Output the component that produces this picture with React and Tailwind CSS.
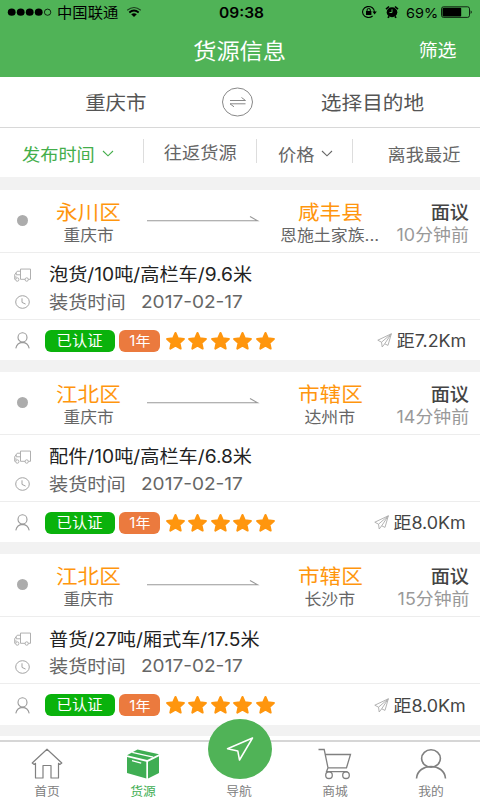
import React from "react";

const loads = [
  { from: "永川区", fromCity: "重庆市", to: "咸丰县", toCity: "恩施土家族...", ago: "10分钟前", goods: "泡货/10吨/高栏车/9.6米", km: "距7.2Km" },
  { from: "江北区", fromCity: "重庆市", to: "市辖区", toCity: "达州市", ago: "14分钟前", goods: "配件/10吨/高栏车/6.8米", km: "距8.0Km" },
  { from: "江北区", fromCity: "重庆市", to: "市辖区", toCity: "长沙市", ago: "15分钟前", goods: "普货/27吨/厢式车/17.5米", km: "距8.0Km" },
];

// Wide-set text; the transform origin keeps the chosen edge in place.
function Text({ className = "", children }) {
  return <span className={"inline-block whitespace-nowrap scale-x-[1.065] " + className}>{children}</span>;
}

function StatusBar() {
  return (
    <div className="flex h-6 items-center text-black">
      <svg className="ml-[7px] w-[46px] h-3 shrink-0" viewBox="0 0 46 12">
        {[4.7, 13.7, 22.7, 31.7].map((x) => <ellipse key={x} cx={x} cy="6.2" rx="3.9" ry="3.6" />)}
        <ellipse cx="40.6" cy="6.2" rx="3.2" ry="3.1" fill="none" stroke="#000" strokeWidth=".8" />
      </svg>
      <Text className="ml-[4px] w-[62px] origin-left pt-px text-[14.4px] leading-6">中国联通</Text>
      <svg className="ml-[7px] w-4 h-3 shrink-0" viewBox="0 0 16 12" fill="none" stroke="#000">
        <path d="M1.2 4.3Q8-1.2 14.8 4.3" strokeWidth="1.1" opacity=".65" />
        <path d="M3.3 6.4Q8 2.8 12.7 6.4" strokeWidth="1.9" />
        <path d="M5.2 8.3Q8 6.2 10.8 8.3L8 11Z" fill="#000" stroke="none" />
      </svg>
      <Text className="ml-[77px] w-[46px] origin-left pt-px text-[14.6px] font-semibold leading-6">09:38</Text>
      <svg className="ml-[96px] w-4 h-4 shrink-0" viewBox="0 0 16 16" fill="none" stroke="#000">
        <path d="M13.5 8.2A6 5.5 0 1 0 11.6 12" strokeWidth="1.1" />
        <path d="M11.4 7.6h4.4l-2.2 2.8Z" fill="#000" stroke="none" />
        <rect x="5" y="7" width="5.4" height="4" fill="#000" stroke="none" />
        <path d="M6.1 7.2V6a1.6 1.6 0 0 1 3.2 0v1.2" />
      </svg>
      <svg className="ml-[8px] w-[14px] h-[14px] shrink-0" viewBox="0 0 14 14">
        <ellipse cx="7" cy="7.3" rx="5.3" ry="5" />
        <path d="M1 4.2L4 1.5M13 4.2L10 1.5M2.8 12.8l1.4-1.4M11.2 12.8l-1.4-1.4" stroke="#000" strokeWidth="1.6" />
        <path d="M7 4.3v3.2H4.5" stroke="#50b357" strokeWidth="1" fill="none" />
      </svg>
      <Text className="ml-[7px] w-[31px] origin-left pt-px text-[13.6px] leading-6">69%</Text>
      <svg className="ml-[4px] w-8 h-3 shrink-0" viewBox="0 0 32 12">
        <rect x=".5" y=".8" width="28" height="10.6" rx="2" fill="none" stroke="#000" strokeWidth=".8" />
        <rect x="1.5" y="1.8" width="18.7" height="8.6" rx="1" />
        <path d="M29.7 4.2q2 1.8 0 3.8Z" />
      </svg>
    </div>
  );
}

function Chevron() {
  return (
    <svg className="w-3 h-2" viewBox="0 0 12 8" fill="none" stroke="currentColor" strokeWidth="1.1">
      <path d="M1 1l5 4.8L11 1" />
    </svg>
  );
}

function Star() {
  return (
    <svg className="w-[21px] h-5" viewBox="0 0 21 20">
      <path d="M10.5 2l2.4 5.3 6 .7-4.4 3.9 1.2 5.7-5.2-2.9-5.2 2.9 1.2-5.7L2.1 8l6-.7Z" fill="#ff960e" stroke="#ff960e" strokeWidth="2" strokeLinejoin="round" />
    </svg>
  );
}

function LoadCard({ item }) {
  return (
    <div className="mb-[12px] h-[170.4px] shrink-0 bg-white">
      <div className="flex h-[63px] border-b border-[#ededed]">
        <div className="w-[44px] pl-[17px] pt-[25px]">
          <div className="h-[11px] w-[11px] rounded-full bg-[#acacac]" />
        </div>
        <div className="flex w-[89px] flex-col items-center pt-[11px]">
          <Text className="text-[20.3px] leading-[24px] text-[#ff960e]">{item.from}</Text>
          <Text className="text-[15.7px] leading-[21px] text-[#666]">{item.fromCity}</Text>
        </div>
        <svg className="ml-[13px] mt-[22px] w-[114px] h-3 shrink-0" viewBox="0 0 114 12" fill="none" stroke="#999">
          <path d="M1 8.8H111.5L104 4.6" strokeWidth="1.1" />
        </svg>
        <div className="ml-[16px] flex w-[108px] flex-col items-center pt-[11px]">
          <Text className="text-[20.3px] leading-[24px] text-[#ff960e]">{item.to}</Text>
          <Text className="text-[15.9px] leading-[21px] text-[#666]">{item.toCity}</Text>
        </div>
        <div className="flex flex-1 flex-col items-end pr-[11px] pt-[11px]">
          <Text className="origin-right text-[18px] font-medium leading-[24px] text-[#444]">面议</Text>
          <Text className="origin-right text-[16.8px] leading-[21px] text-[#999]">{item.ago}</Text>
        </div>
      </div>
      <div className="h-[67px] border-b border-[#ededed] pt-[8px]">
        <div className="flex h-[28px] items-center">
          <svg className="ml-[14px] w-[18px] h-[14px]" viewBox="0 0 18 13" preserveAspectRatio="none" fill="none" stroke="#aaa" strokeWidth=".9">
            <path d="M6.5 10.5V1H16.5V10.5H14.3M11.2 10.5H6.5M6.5 3H3.2L.7 6.2V10.5H1.5M6.5 6.3H2.2V4.4M1 8.4h1.6" />
            <circle cx="3.3" cy="10.7" r="1.6" /><circle cx="12.7" cy="10.7" r="1.6" />
          </svg>
          <Text className="ml-[17px] origin-left text-[18px] text-[#222]">{item.goods}</Text>
        </div>
        <div className="flex h-[27px] items-center">
          <svg className="ml-[15px] w-[15px] h-[14px]" viewBox="0 0 15 14" fill="none" stroke="#a3a3a3">
            <ellipse cx="7.5" cy="7" rx="6.8" ry="6.3" /><path d="M7 3.3V7.4l3.6 1.7" />
          </svg>
          <Text className="ml-[19px] w-[92px] origin-left text-[18px] text-[#666]">装货时间</Text>
          <Text className="origin-left text-[17.9px] text-[#666]">2017-02-17</Text>
        </div>
      </div>
      <div className="flex h-[40px] items-center pt-[2px]">
        <svg className="ml-[15px] w-[15px] h-[17px]" viewBox="0 0 15 17" fill="none" stroke="#999" strokeWidth="1.1">
          <ellipse cx="7.5" cy="5.4" rx="4.5" ry="4.6" /><path d="M.8 16.3Q2 10.7 7.5 10.4Q13 10.7 14.2 16.3" />
        </svg>
        <div className="ml-[15px] flex h-[22px] w-[70px] items-center justify-center rounded-[6px] bg-[#0ab20c] text-white">
          <Text className="text-[14.4px]">已认证</Text>
        </div>
        <div className="ml-[4px] flex h-[22px] w-[41px] items-center justify-center rounded-[6px] bg-[#eb7a3e] text-white">
          <Text className="text-[14px]">1年</Text>
        </div>
        <div className="ml-[5px] flex gap-[1.4px]">
          {[0, 1, 2, 3, 4].map((i) => <Star key={i} />)}
        </div>
        <div className="flex flex-1 items-center justify-end pr-[14px]">
          <svg className="mr-[9px] w-[15px] h-[15px]" viewBox="0 0 15 15" fill="none" stroke="#aaa" strokeWidth=".9">
            <path d="M14.3.8L.8 7.2l3.7 2L5.2 14l2.5-3.2 3.3 1.6ZM4.5 9.2L14.3.8 7.7 10.8" />
          </svg>
          <Text className="origin-right pt-[2px] text-[16.8px] text-[#444]">{item.km}</Text>
        </div>
      </div>
    </div>
  );
}

function Tab({ label, active, children }) {
  return (
    <div className={"flex w-24 flex-col items-center pt-[6px] " + (active ? "text-[#3fae53]" : "text-[#808080]")}>
      <div className="h-[34px] shrink-0">{children}</div>
      <Text className="text-[12px] leading-[20px]">{label}</Text>
    </div>
  );
}

export default function App() {
  return (
    <div className="flex h-[800px] w-[480px] flex-col overflow-hidden bg-[#f2f2f2] font-['Inter','Noto_Sans_CJK_SC',sans-serif]">
      <header className="h-[77px] shrink-0 bg-[#50b357]">
        <StatusBar />
        <div className="grid h-[53px] grid-cols-[1fr_auto_1fr] items-center pt-px text-white">
          <span />
          <Text className="text-[21.8px]">货源信息</Text>
          <Text className="mr-[23px] origin-right justify-self-end pt-px text-[17.8px]">筛选</Text>
        </div>
      </header>
      <div className="flex h-[51px] shrink-0 items-center border-b border-[#d8d8d8] bg-white text-[#555]">
        <div className="w-[222px] pl-[10px] pt-[3px] text-center"><Text className="text-[19.2px]">重庆市</Text></div>
        <svg className="w-[32px] h-[30px] shrink-0" viewBox="0 0 32 30" fill="none" stroke="#888">
          <ellipse cx="15.5" cy="15" rx="15" ry="14" />
          <path d="M8 13.5H23.5L19.5 10.5M23.5 16.8H8L12 19.8" />
        </svg>
        <div className="flex-1 pl-[10px] pt-[3px] text-center"><Text className="text-[19.4px]">选择目的地</Text></div>
      </div>
      <div className="flex h-[49px] shrink-0 items-center bg-white text-[17.1px] text-[#666]">
        <div className="flex w-[143px] items-center pl-[22px] pt-[4px] text-[#44ae4b]">
          <Text className="w-[80px] origin-left pt-px">发布时间</Text><Chevron />
        </div>
        <div className="mb-[3px] h-6 w-px bg-[#ddd]" />
        <div className="w-[112px] text-center"><Text>往返货源</Text></div>
        <div className="mb-[3px] h-6 w-px bg-[#ddd]" />
        <div className="flex w-[95px] items-center pl-[21px] pt-[4px]">
          <Text className="w-[43px] origin-left pt-px">价格</Text><Chevron />
        </div>
        <div className="mb-[3px] h-6 w-px bg-[#ddd]" />
        <div className="flex flex-1 justify-end pr-[20px] pt-[5px]"><Text className="origin-right">离我最近</Text></div>
      </div>
      <main className="h-[559px] shrink-0 overflow-hidden pt-[12.5px]">
        {loads.map((item, i) => <LoadCard key={i} item={item} />)}
      </main>
      <nav className="relative h-[64px] shrink-0 bg-white pt-[4px]">
        <div className="-ml-px flex h-[60px] w-[481px] border-t-2 border-[#d6d6d6]">
          <Tab label="首页">
            <svg className="w-8 h-8" viewBox="0 0 32 32" fill="none" stroke="#808080" strokeWidth="1.2" strokeLinejoin="round">
              <path d="M1.2 15L16 1.2 30.8 15 28.8 16.5 27.5 15.3V30H20V17.5H12V30H4.5V15.3L3.2 16.5Z" />
            </svg>
          </Tab>
          <Tab label="货源" active>
            <svg className="w-[34px] h-8" viewBox="0 0 34 32" fill="#3fae53">
              <path d="M1 7.2L11.5 1.5 33 6.3 21.2 12ZM1 9L20.3 13.8V30.5L1 25ZM22 13.8L33 8.2V25L22 30.5Z" />
              <path d="M6.2 4.4L27.2 9.2M6 12.7L15.2 15.2" stroke="#fff" strokeWidth="1.3" />
            </svg>
          </Tab>
          <Tab label="导航" />
          <Tab label="商城">
            <svg className="w-[34px] h-8" viewBox="0 0 34 32" fill="none" stroke="#808080" strokeWidth="1.3">
              <path d="M.5 1.5H6.2L10 19.8H28.5L32.5 6.5H7.4M10 19.8L8.5 23.7H29.5" />
              <circle cx="11" cy="27.2" r="3.3" /><circle cx="28" cy="27.2" r="3.3" />
            </svg>
          </Tab>
          <Tab label="我的">
            <svg className="w-8 h-8" viewBox="0 0 32 32" fill="none" stroke="#808080" strokeWidth="1.6">
              <ellipse cx="16" cy="10.5" rx="9.4" ry="8.7" /><path d="M1.5 30.5C2.5 14.5 29.5 14.5 30.5 30.5" />
            </svg>
          </Tab>
        </div>
        <div className="absolute left-[208px] top-[-17px] flex h-[60px] w-[64px] items-center justify-center rounded-[50%] bg-[#50b357]">
          <svg className="w-7 h-6" viewBox="0 0 28 24" fill="none" stroke="#fff" strokeWidth="1.5" strokeLinejoin="round">
            <path d="M26.5 1L1.5 11.8 11.8 14 13.5 23Z" />
          </svg>
        </div>
      </nav>
    </div>
  );
}
